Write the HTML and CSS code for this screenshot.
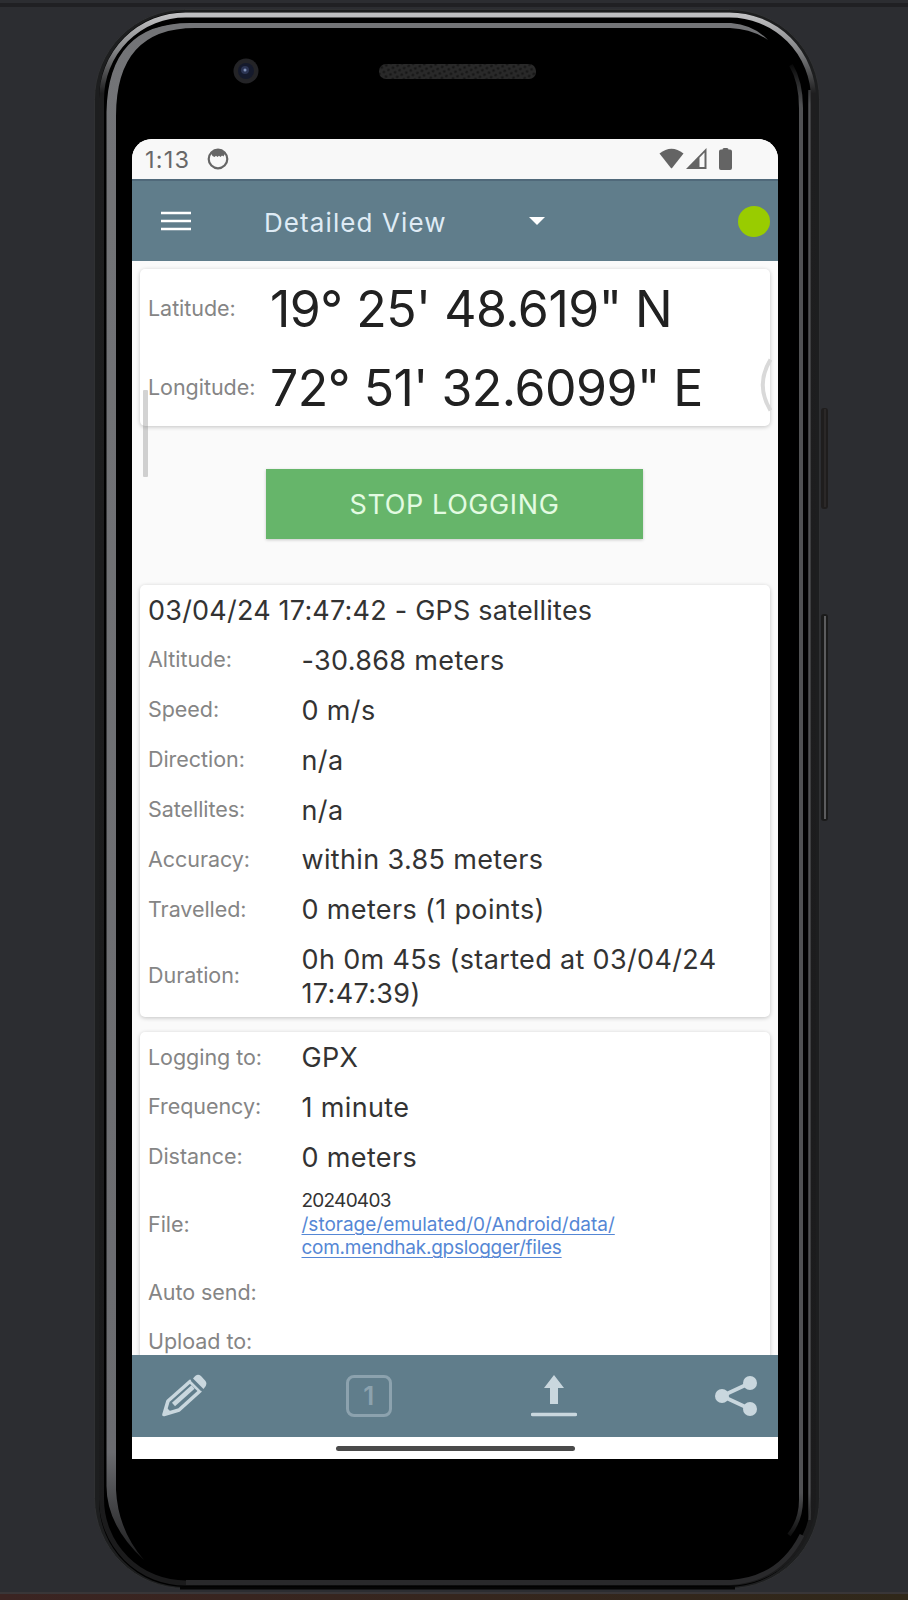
FILE: index.html
```html
<!DOCTYPE html>
<html lang="en">
<head>
<meta charset="utf-8">
<title>GPSLogger</title>
<link rel="stylesheet" href="styles.css">
</head>
<body>
<div class="stage">
  <svg class="frame" viewBox="0 0 908 1600" aria-hidden="true">
    <defs>
      <linearGradient id="rim" x1="0" y1="0" x2="0" y2="1">
        <stop offset="0" stop-color="#c0c0c2"/>
        <stop offset=".022" stop-color="#858688"/>
        <stop offset=".05" stop-color="#1e1e1f"/>
        <stop offset="1" stop-color="#1b1b1c"/>
      </linearGradient>
      <linearGradient id="foot" x1="0" y1="0" x2="1" y2="0">
        <stop offset="0" stop-color="#3b2422"/>
        <stop offset="1" stop-color="#30281a"/>
      </linearGradient>
      <linearGradient id="side" x1="0" y1="0" x2="0" y2="1">
        <stop offset="0" stop-color="#737477"/>
        <stop offset=".93" stop-color="#6b6c70"/>
        <stop offset="1" stop-color="#1c1c1d"/>
      </linearGradient>
      <linearGradient id="edge" gradientUnits="userSpaceOnUse" x1="0" y1="60" x2="0" y2="1545">
        <stop offset="0" stop-color="#505153" stop-opacity="0"/>
        <stop offset=".03" stop-color="#505153"/>
        <stop offset=".965" stop-color="#505153"/>
        <stop offset="1" stop-color="#505153" stop-opacity="0"/>
      </linearGradient>
      <pattern id="mesh" width="5" height="5" patternUnits="userSpaceOnUse" patternTransform="rotate(-25)">
        <rect width="5" height="5" fill="#292929"/>
        <circle cx="2.5" cy="2.5" r="1.3" fill="#151515"/>
      </pattern>
    </defs>
    <rect y="3" width="908" height="4" fill="#202023"/>
    <rect x="821" y="408" width="7" height="101" rx="3" fill="#1f1d1d"/>
    <path d="M825 409v98" stroke="#302d2c" stroke-width="1.500"/>
    <rect x="821" y="614" width="7" height="207" rx="3" fill="#1b1b1b"/>
    <path d="M825 616v203" stroke="#5c5c5e" stroke-width="2"/>
    <rect x="94.500" y="9.500" width="725" height="1579" rx="90" fill="#1d1e1f" stroke="#303133"/>
    <rect x="99" y="12" width="715" height="1575" rx="86" fill="#000"/>
    <rect x="101.500" y="15" width="712" height="1568" rx="84" fill="#000" stroke="url(#rim)" stroke-width="5"/>
    <path d="M111 1500V116Q111 26 186 26H731" fill="none" stroke="#68696c" stroke-width="4"/>
    <path d="M106.500 1485V112Q108 23 190 23H731Q754 25 768 40Q752 29 730 28H195Q116 28 116 116V1490Q118 1530 144 1560Q106 1525 106.500 1485Z" fill="url(#side)"/>
    <path d="M791 65Q801 82 801 108V1500Q801 1520 789 1535" fill="none" stroke="url(#edge)" stroke-width="4"/>
    <path d="M809.500 90V1520" stroke="url(#edge)" stroke-width="2.500"/>
    <path d="M186 1582.500H731Q780 1579 802 1535" fill="none" stroke="#29292b" stroke-width="5"/>
    <path d="M180 1588H735" stroke="#050505" stroke-width="3"/>
    <rect y="1593" width="908" height="7" fill="url(#foot)"/>
    <rect y="1592" width="908" height="2" fill="#393638"/>
    <circle cx="246" cy="71" r="12.500" fill="#242427"/>
    <circle cx="246" cy="71" r="8" fill="#151a2c"/>
    <circle cx="245" cy="70" r="4" fill="#2c3554"/>
    <circle cx="245" cy="70" r="1.500" fill="#8192b8"/>
    <rect x="379" y="64" width="157" height="15" rx="7" fill="url(#mesh)"/>
  </svg>

  <main class="screen">
    <header class="status">
      <span class="clock">1:13</span>
      <svg class="face" viewBox="0 0 22 22"><circle cx="11" cy="11" r="9.300" fill="none" stroke="#666" stroke-width="2.200"/><path d="M3.500 4.500Q11-1.500 18.500 4.500L16.500 8.500 15 7.500 13.500 9 12 7.800 10.500 9 9 7.800 7.500 9 5.500 8Z" fill="#666"/></svg>
      <span class="grow"></span>
      <svg class="wifi" viewBox="0 0 25 21"><path d="M.5 5.500Q12.500-4 24.500 5.500L13.300 19.700Q12.500 20.700 11.700 19.700Z" fill="#646464"/></svg>
      <svg class="cell" viewBox="0 0 21 21"><path d="M0 21 20.500 0V21Z" fill="#646464"/><path d="M13.500 9.700 18.500 4.500V19H13.500Z" fill="#f8f8f8"/></svg>
      <svg class="battery" viewBox="0 0 13 22"><path d="M3.500 1.500Q3.500 0 5 0H8Q9.500 0 9.500 1.500H11Q13 1.500 13 3.500V20Q13 22 11 22H2Q0 22 0 20V3.500Q0 1.500 2 1.500Z" fill="#646464"/></svg>
    </header>

    <nav class="appbar">
      <svg class="menu" viewBox="0 0 30 20"><path d="M0 2H30M0 10H30M0 18H30" stroke="#fff" stroke-width="2.700"/></svg>
      <span class="title">Detailed View</span>
      <svg class="caret" viewBox="0 0 16 8"><path d="M0 0H16L8 8Z" fill="#fff"/></svg>
      <span class="grow"></span>
      <span class="dot"></span>
    </nav>

    <section class="content">
      <div class="card coords">
        <div class="coord"><span class="label">Latitude:</span><span class="big">19° 25' 48.619" N</span></div>
        <div class="coord"><span class="label">Longitude:</span><span class="big">72° 51' 32.6099" E</span></div>
      </div>
      <span class="scrollbar"></span>
      <svg class="handle" viewBox="0 0 12 54"><path d="M10.500 1.500Q-5 27 10.500 52.500" fill="none" stroke="#d9d9d9" stroke-width="4"/></svg>

      <button class="stop">STOP LOGGING</button>

      <div class="card details">
        <div class="heading">03/04/24 17:47:42 - GPS satellites</div>
        <div class="row"><span class="label">Altitude:</span><span class="value">-30.868 meters</span></div>
        <div class="row"><span class="label">Speed:</span><span class="value">0 m/s</span></div>
        <div class="row"><span class="label">Direction:</span><span class="value">n/a</span></div>
        <div class="row"><span class="label">Satellites:</span><span class="value">n/a</span></div>
        <div class="row"><span class="label">Accuracy:</span><span class="value">within 3.85 meters</span></div>
        <div class="row"><span class="label">Travelled:</span><span class="value">0 meters (1 points)</span></div>
        <div class="row"><span class="label">Duration:</span><span class="value">0h 0m 45s (started at 03/04/24<br>17:47:39)</span></div>
      </div>

      <div class="card logging">
        <div class="row"><span class="label">Logging to:</span><span class="value">GPX</span></div>
        <div class="row"><span class="label">Frequency:</span><span class="value">1 minute</span></div>
        <div class="row"><span class="label">Distance:</span><span class="value">0 meters</span></div>
        <div class="row file-row"><span class="label">File:</span><span class="file"><span class="filename">20240403</span><br><a>/storage/emulated/0/Android/data/<br><span class="package">com.mendhak.gpslogger/files</span></a></span></div>
        <div class="row"><span class="label">Auto send:</span></div>
        <div class="row"><span class="label">Upload to:</span></div>
      </div>
    </section>

    <footer class="toolbar">
      <svg class="pencil" viewBox="0 0 46 43">
        <path d="M3 40.500 7 27 29 7.500 39 17 18 36Z" fill="none" stroke="#c9d7de" stroke-width="3.600" stroke-linejoin="round"/>
        <path d="M1.500 42 5 33 11 39Z" fill="#c9d7de"/>
        <path d="M12.500 30.500 32 13" stroke="#c9d7de" stroke-width="4.500"/>
        <path d="M30.500 6 41 16.500" stroke="#607d8b" stroke-width="2.200"/>
        <path d="M32 4.500Q36-1.500 40 2L44.500 7Q47 10.500 42.500 15Z" fill="#c9d7de"/>
      </svg>
      <span class="note">1</span>
      <svg class="upload" viewBox="0 0 46 42"><path d="M23 0 33 13H27V29H19V13H13Z" fill="#c9d7de"/><path d="M1.500 39.500H44.500" stroke="#c9d7de" stroke-width="3.500" stroke-linecap="round"/></svg>
      <svg class="share" viewBox="0 0 43 40"><path d="M35 7 7 20 35 33" fill="none" stroke="#c9d7de" stroke-width="3.800"/><g fill="#c9d7de"><circle cx="35" cy="7" r="7"/><circle cx="7" cy="20" r="7"/><circle cx="35" cy="33" r="7"/></g></svg>
    </footer>
    <div class="gesture"><span class="pill"></span></div>
  </main>
</div>
</body>
</html>
```
FILE: styles.css
```css
* { box-sizing: border-box; }
body { margin: 0; background: #2c2d31; font-family: Inter, "Noto Sans", sans-serif; }
.stage { position: relative; width: 908px; height: 1600px; padding: 139px 130px 0 132px; overflow: hidden; }
.frame { position: absolute; left: 0; top: 0; width: 908px; height: 1600px; }
.screen { position: relative; display: flex; flex-direction: column; width: 646px; height: 1319.5px; overflow: hidden; background: #fff; border-radius: 20px 20px 0 0; }
.grow { flex: 1; }
svg { display: block; flex: none; }

.status { display: flex; align-items: center; flex: none; height: 39.5px; padding: 0 46px 0 13px; background: #f8f8f8; }
.clock { width: 62px; padding-top: 2px; color: #686868; font-size: 23.5px; letter-spacing: 1.2px; }
.face { width: 22px; height: 22px; }
.wifi { width: 25px; height: 21px; margin-right: 2px; }
.cell { width: 21px; height: 21px; margin-right: 12px; }
.battery { width: 13px; height: 22px; }

.appbar { display: flex; align-items: center; flex: none; height: 82.5px; padding: 1px 8px 0 29px; background: #607d8b; border-top: 2px solid #50697a; }
.menu { width: 30px; height: 20px; }
.title { width: 340px; padding: 2px 0 0 73px; color: #dfebf5; font-size: 26px; letter-spacing: 1.1px; white-space: nowrap; }
.caret { width: 16px; height: 8px; margin-left: -2px; }
.dot { width: 32px; height: 31px; border-radius: 50%; background: #99cc00; }

.content { position: relative; flex: none; height: 1094px; padding: 8px 8px 0 8px; overflow: hidden; background: #fafafa; }
.card { background: #fff; border-radius: 5px; box-shadow: 0 1px 4px rgba(0,0,0,.22); padding: 0 8px; }
.coord { display: flex; align-items: center; height: 78.5px; }
.coords .label { width: 122px; }
.label { width: 153.5px; flex: none; color: #858585; font-size: 21.5px; letter-spacing: -.05px; white-space: nowrap; }
.big { padding-top: 2px; color: #212121; font-size: 50px; line-height: 76px; letter-spacing: -.5px; white-space: nowrap; }
.scrollbar { position: absolute; left: 11px; top: 129px; width: 5px; height: 87px; background: rgba(120,120,120,.33); border-radius: 1px; }
.handle { position: absolute; left: 628px; top: 97px; width: 12px; height: 54px; }
.stop { display: block; width: 377px; height: 70px; margin: 43px 0 45.5px 126px; padding: 1px 0 0; border: 0; background: #66b56a; color: #e3fbe2; font: 400 27px Inter, sans-serif; letter-spacing: .6px; box-shadow: 0 1px 3px rgba(0,0,0,.2); }
.heading { height: 50px; line-height: 51.5px; font-size: 27px; letter-spacing: .21px; color: #333; white-space: nowrap; }
.row { display: flex; align-items: center; min-height: 49.85px; padding: 8px 0; }
.value { padding-top: 1.5px; margin-bottom: -1.5px; color: #333; font-size: 27px; line-height: 33.8px; letter-spacing: .35px; white-space: nowrap; }
.logging { margin-top: 14.5px; }
.file-row { height: 85.5px; }
.file { padding-top: 1px; font-size: 19px; line-height: 23.5px; color: #333; white-space: nowrap; }
.filename { letter-spacing: -.75px; }
.package { letter-spacing: -.26px; }
.file a { color: #5587d5; text-decoration: underline; text-underline-offset: 3px; text-decoration-thickness: 1px; }

.toolbar { display: flex; align-items: center; justify-content: space-between; flex: none; height: 81.5px; padding: 0 19.5px 0 29px; background: #607d8b; }
.pencil { width: 46px; height: 43px; }
.note { display: flex; align-items: center; justify-content: center; width: 46px; height: 42px; border: 3px solid #8ca2ae; border-radius: 8px; color: #8ca2ae; font-size: 26px; font-weight: 600; }
.upload { width: 46px; height: 42px; }
.share { width: 43px; height: 40px; }
.gesture { display: flex; align-items: center; justify-content: center; flex: none; height: 22px; padding-top: 1px; }
.pill { width: 239px; height: 5px; border-radius: 3px; background: #4a4a4a; }
```
